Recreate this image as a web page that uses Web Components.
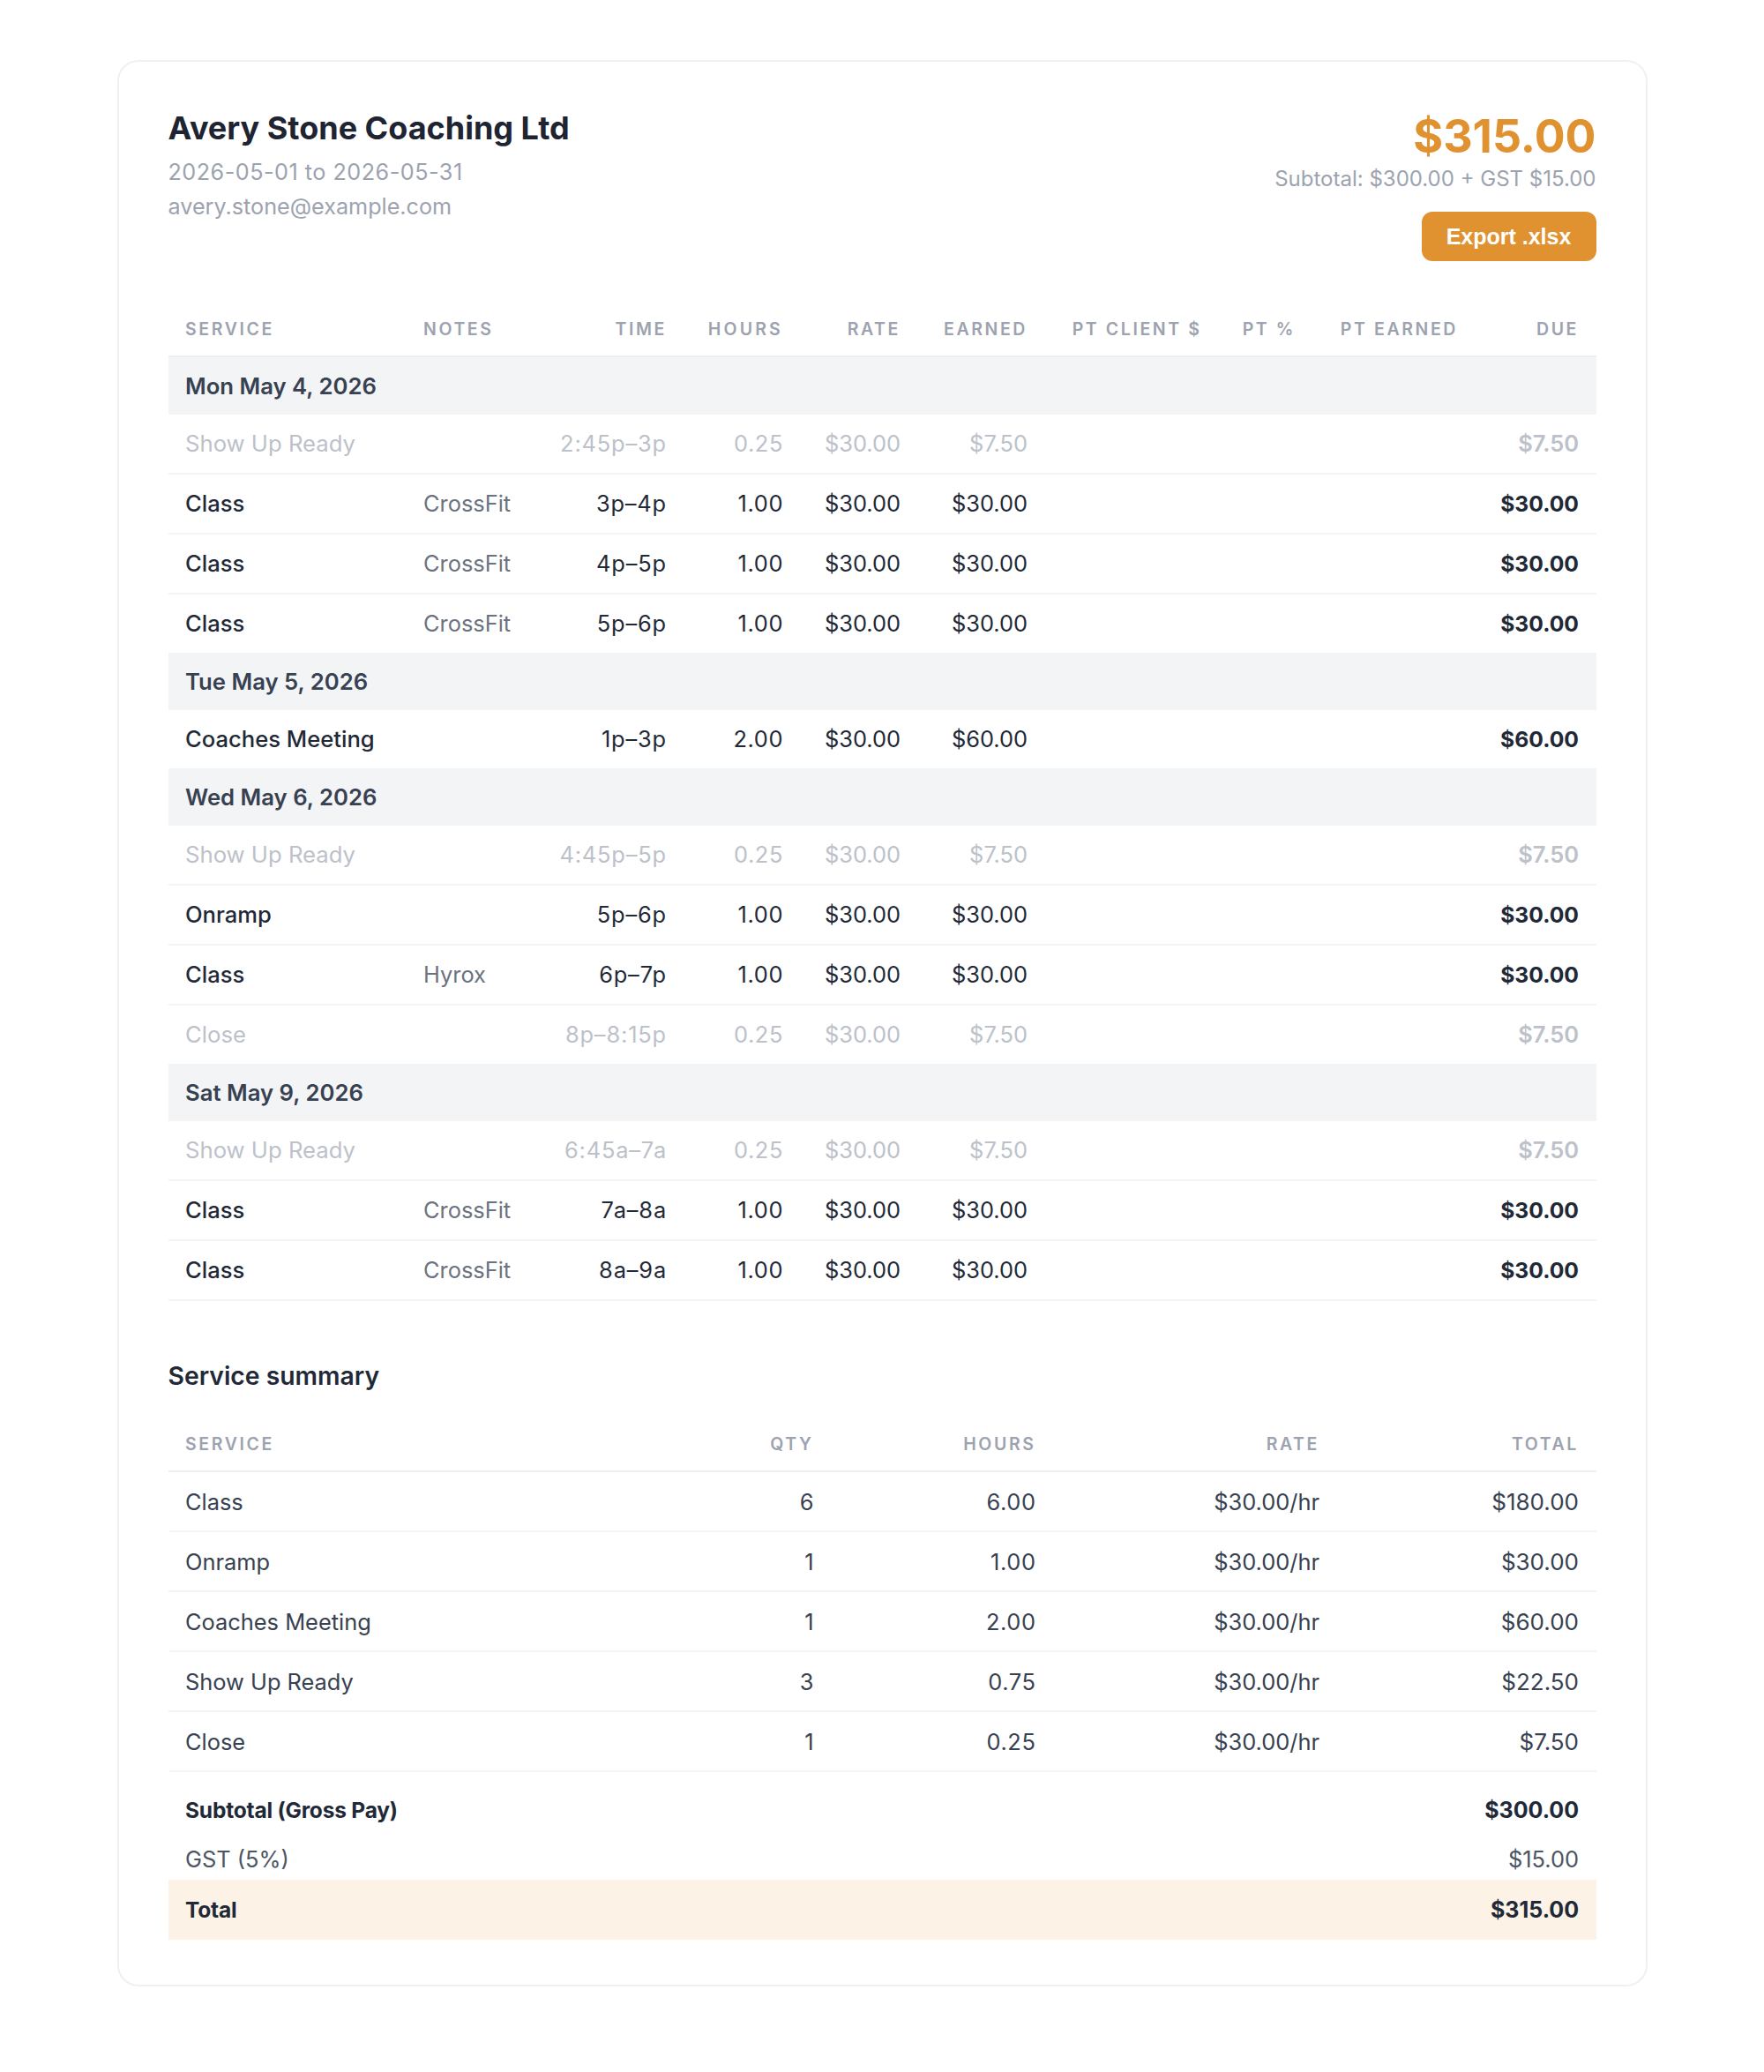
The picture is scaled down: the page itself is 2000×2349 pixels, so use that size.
<!doctype html>
<html>
<head>
<meta charset="utf-8">
<title>Avery Stone Coaching Ltd</title>
<style>
    html, body { margin: 0; background: #fff; }
    body { padding: 68px 132.5px 95px; font-family: Inter, "Liberation Sans", sans-serif; color: #1f2937; }
</style>
</head>
<body>
<statement-card>
    <statement-header
        name="Avery Stone Coaching Ltd"
        range="2026-05-01 to 2026-05-31"
        email="avery.stone@example.com"
        total="$315.00"
        breakdown="Subtotal: $300.00 + GST $15.00"></statement-header>
    <shift-table></shift-table>
    <summary-table></summary-table>
</statement-card>

<script>
const SHIFT_DAYS = [
    { day: 'Mon May 4, 2026', rows: [
        ['Show Up Ready', '', '2:45p–3p', '0.25', '$7.50', 1],
        ['Class', 'CrossFit', '3p–4p', '1.00', '$30.00'],
        ['Class', 'CrossFit', '4p–5p', '1.00', '$30.00'],
        ['Class', 'CrossFit', '5p–6p', '1.00', '$30.00'],
    ] },
    { day: 'Tue May 5, 2026', rows: [
        ['Coaches Meeting', '', '1p–3p', '2.00', '$60.00'],
    ] },
    { day: 'Wed May 6, 2026', rows: [
        ['Show Up Ready', '', '4:45p–5p', '0.25', '$7.50', 1],
        ['Onramp', '', '5p–6p', '1.00', '$30.00'],
        ['Class', 'Hyrox', '6p–7p', '1.00', '$30.00'],
        ['Close', '', '8p–8:15p', '0.25', '$7.50', 1],
    ] },
    { day: 'Sat May 9, 2026', rows: [
        ['Show Up Ready', '', '6:45a–7a', '0.25', '$7.50', 1],
        ['Class', 'CrossFit', '7a–8a', '1.00', '$30.00'],
        ['Class', 'CrossFit', '8a–9a', '1.00', '$30.00'],
    ], keepLastBorder: true },
];

const SUMMARY_ROWS = [
    ['Class', '6', '6.00', '$30.00/hr', '$180.00'],
    ['Onramp', '1', '1.00', '$30.00/hr', '$30.00'],
    ['Coaches Meeting', '1', '2.00', '$30.00/hr', '$60.00'],
    ['Show Up Ready', '3', '0.75', '$30.00/hr', '$22.50'],
    ['Close', '1', '0.25', '$30.00/hr', '$7.50'],
];

const TABLE_CSS = `
    table { width: 100%; border-collapse: separate; border-spacing: 0; table-layout: fixed; }
    th {
        height: 66px; box-sizing: content-box; padding: 0 19.5px 18px; vertical-align: bottom;
        font-size: 19.5px; line-height: 24px; font-weight: 600; letter-spacing: 2.6px;
        color: #9ca3af; text-align: left; white-space: nowrap;
        border-bottom: 2px solid #eceef0;
    }
    th.r { text-align: right; }
    td { padding: 1px 19.5px 0; font-size: 25.4px; line-height: 34px; white-space: nowrap; }
    .r { text-align: right; }
    .hrs { letter-spacing: 0.6px; }
`;

class StatementCard extends HTMLElement {
    constructor() {
        super();
        this.attachShadow({ mode: 'open' }).innerHTML = `
            <style>
                :host {
                    display: block; box-sizing: border-box;
                    border: 2px solid #eef0f2; border-radius: 24px;
                    padding: 56px 56px 51.5px; background: #fff;
                }
            </style>
            <slot></slot>`;
    }
}

class StatementHeader extends HTMLElement {
    connectedCallback() {
        const a = n => this.getAttribute(n);
        this.attachShadow({ mode: 'open' }).innerHTML = `
            <style>
                :host { display: flex; justify-content: space-between; align-items: flex-start; height: 193px; }
                h1 { margin: -3px 0 0; font-size: 36px; line-height: 44px; font-weight: 700; color: #1f2433; }
                .meta { font-size: 25.2px; line-height: 39px; color: #9ca3af; }
                .range { margin-top: 9px; letter-spacing: 0.5px; }
                .right { display: flex; flex-direction: column; align-items: flex-end; }
                .total { font-size: 51.8px; line-height: 56px; font-weight: 700; color: #e09230; }
                .breakdown { font-size: 24px; line-height: 36px; color: #9ca3af; margin-top: 3px; }
                button {
                    margin-top: 19px; width: 198px; height: 56px; border: 0; border-radius: 12px;
                    background: #e09230; color: #fff;
                    font: 700 25px "Liberation Sans", sans-serif;
                }
            </style>
            <div>
                <h1>${a('name')}</h1>
                <div class="meta range">${a('range')}</div>
                <div class="meta">${a('email')}</div>
            </div>
            <div class="right">
                <div class="total">${a('total')}</div>
                <div class="breakdown">${a('breakdown')}</div>
                <button>Export .xlsx</button>
            </div>`;
    }
}

class ShiftTable extends HTMLElement {
    connectedCallback() {
        const cols = [270, 126, 189, 132, 133, 144, 197.5, 106.5, 184, 137];
        const heads = ['Service', 'Notes', 'Time', 'Hours', 'Rate', 'Earned', 'PT Client $', 'PT %', 'PT Earned', 'Due'];
        let body = '';
        SHIFT_DAYS.forEach(group => {
            body += `<tr class="day"><td colspan="10">${group.day}</td></tr>`;
            group.rows.forEach((row, i) => {
                const last = i === group.rows.length - 1 && !group.keepLastBorder;
                const cls = (row[5] ? 'dim ' : '') + (last ? 'last' : '');
                body += `<tr class="${cls}">
                    <td class="svc">${row[0]}</td><td class="note">${row[1]}</td>
                    <td class="r time">${row[2]}</td><td class="r hrs">${row[3]}</td>
                    <td class="r">$30.00</td><td class="r">${row[4]}</td>
                    <td></td><td></td><td></td>
                    <td class="r due">${row[4]}</td>
                </tr>`;
            });
        });
        this.attachShadow({ mode: 'open' }).innerHTML = `
            <style>
                :host { display: block; }
                ${TABLE_CSS}
                .day td { height: 63.5px; background: #f3f4f6; font-size: 25.7px; font-weight: 600; color: #374151; }
                tbody tr:not(.day) td { height: 65px; border-bottom: 2px solid #f3f4f6; color: #1f2937; }
                tbody tr.last td { height: 65.5px; border-bottom: 0; }
                .svc { font-weight: 500; font-size: 25.6px; }
                .time { letter-spacing: 0.85px; }
                td.note { color: #6b7280 !important; }
                .due { font-weight: 700; font-size: 24.7px; }
                th.wide { letter-spacing: 3.2px; }
                tbody tr.dim td, tbody tr.dim td.note { color: #bcc1ca !important; font-weight: 400; }
                tbody tr.dim .svc { font-size: 25.7px; }
                tbody tr.dim td.due { font-weight: 600; font-size: 25.5px; }
            </style>
            <table>
                <colgroup>${cols.map(w => `<col style="width:${w}px">`).join('')}</colgroup>
                <thead><tr>${heads.map((h, i) => `<th class="${i > 1 ? 'r' : ''} ${h === 'Hours' ? 'wide' : ''}">${h.toUpperCase()}</th>`).join('')}</tr></thead>
                <tbody>${body}</tbody>
            </table>`;
    }
}

class SummaryTable extends HTMLElement {
    connectedCallback() {
        const heads = ['Service', 'Qty', 'Hours', 'Rate', 'Total'];
        const rows = SUMMARY_ROWS.map(r => `<tr class="item">
            <td>${r[0]}</td><td class="r">${r[1]}</td><td class="r hrs">${r[2]}</td>
            <td class="r">${r[3]}</td><td class="r amt">${r[4]}</td></tr>`).join('');
        this.attachShadow({ mode: 'open' }).innerHTML = `
            <style>
                :host { display: block; margin-top: 67px; }
                ${TABLE_CSS}
                h2 { margin: 0 0 30px; font-size: 28.3px; line-height: 36px; font-weight: 600; color: #1f2937; }
                th { height: 41.5px; }
                .item td { height: 65px; border-bottom: 2px solid #f3f4f6; color: #374151; }
                .amt { font-size: 26px; }
                .sub td { height: 60.5px; padding-top: 13px; font-size: 25px; font-weight: 700; color: #1f2937; }
                .gst td { height: 46px; color: #4b5563; padding-top: 2px; }
                .tot td { height: 67px; background: #fdf2e6; font-size: 25px; font-weight: 700; color: #1f2937; }
                .sub td.label, .tot td.label { font-size: 24.5px; letter-spacing: -0.2px; }
            </style>
            <h2>Service summary</h2>
            <table>
                <colgroup><col style="width:620px"><col style="width:131.5px"><col style="width:252px"><col style="width:321.5px"><col style="width:294px"></colgroup>
                <thead><tr>${heads.map((h, i) => `<th class="${i ? 'r' : ''}">${h.toUpperCase()}</th>`).join('')}</tr></thead>
                <tbody>
                    ${rows}
                    <tr class="sub"><td colspan="4" class="label">Subtotal (Gross Pay)</td><td class="r">$300.00</td></tr>
                    <tr class="gst"><td colspan="4">GST (5%)</td><td class="r">$15.00</td></tr>
                    <tr class="tot"><td colspan="4" class="label">Total</td><td class="r">$315.00</td></tr>
                </tbody>
            </table>`;
    }
}

customElements.define('statement-card', StatementCard);
customElements.define('statement-header', StatementHeader);
customElements.define('shift-table', ShiftTable);
customElements.define('summary-table', SummaryTable);
</script>
</body>
</html>
